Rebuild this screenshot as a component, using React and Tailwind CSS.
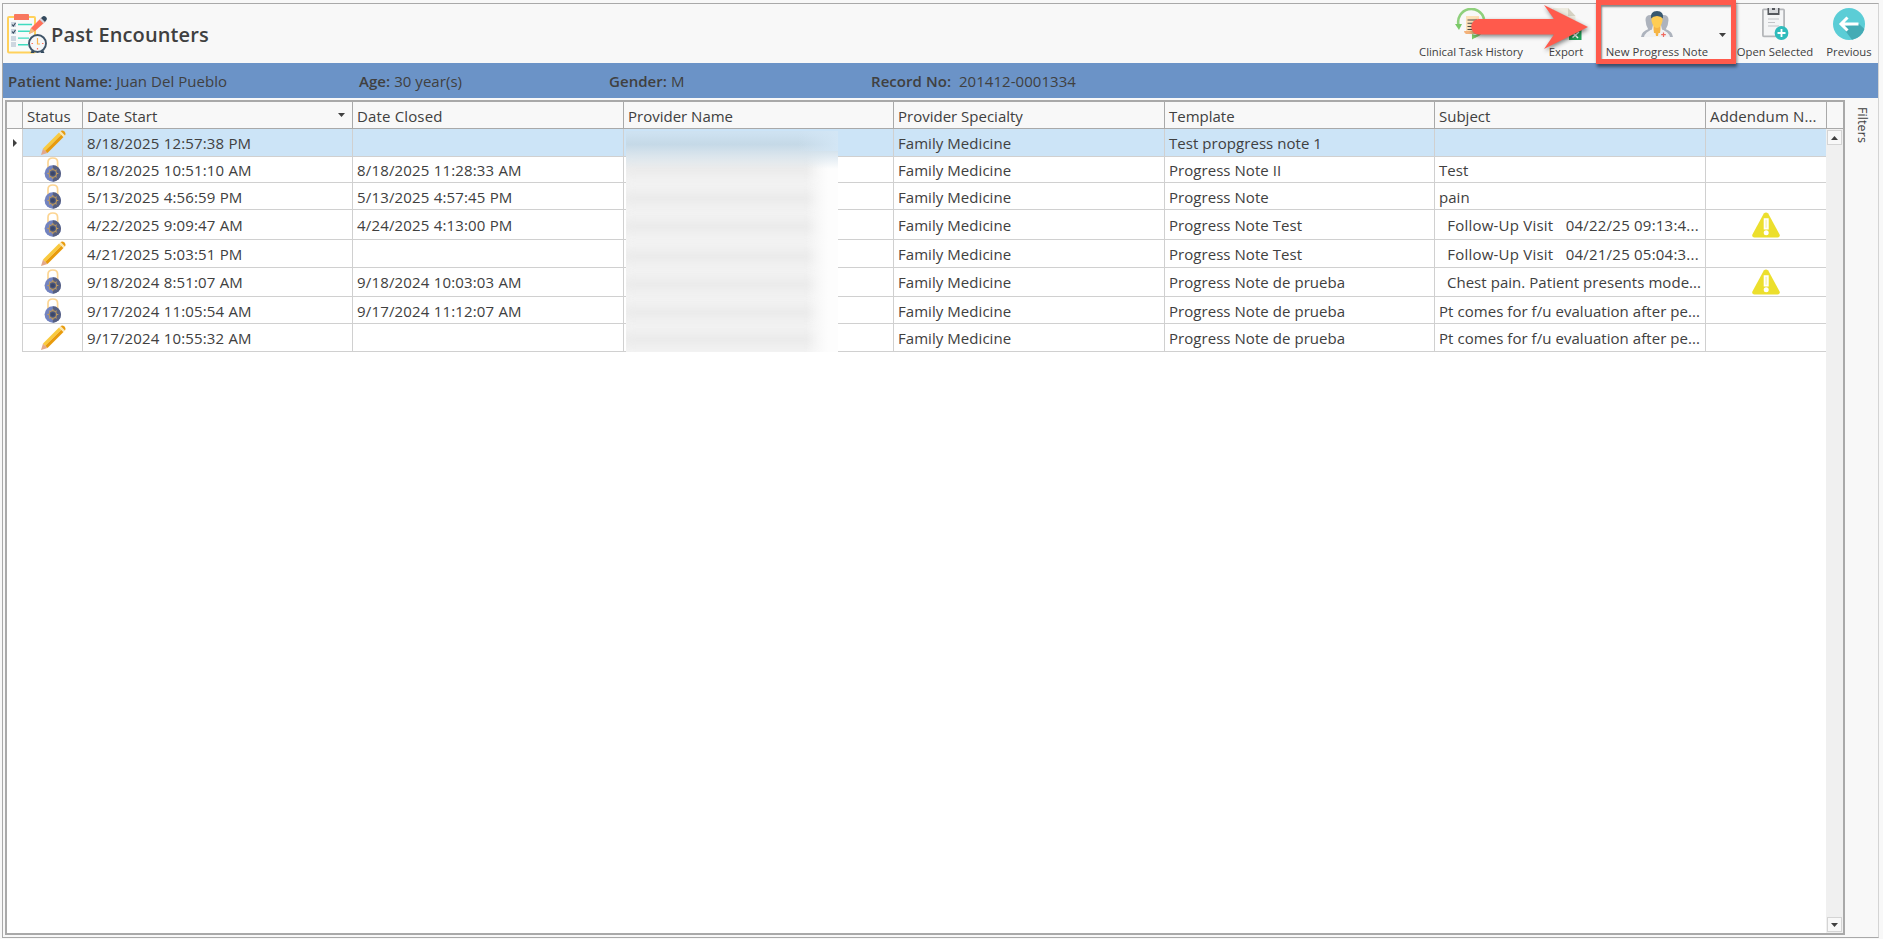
import React from "react";

const FONT = "font-['Open_Sans','Noto_Sans',sans-serif]";

function Pencil() {
  return (
    <svg width="26" height="26" viewBox="0 0 26 26" className="shrink-0">
      <path d="M1 25 3 18.5 7.5 23Z" fill="#e3a88c" />
      <path d="M3 18.5 19 2.6 21.3 4.8 5.2 20.8Z" fill="#f9ca3e" />
      <path d="M5.2 20.8 21.3 4.8 23.5 7 7.5 23Z" fill="#e89b0c" />
      <path d="M19 2.6 20.6 1 25 5.4 23.5 7Z" fill="#fbe6b0" />
      <path d="M20.6 1Q22.5 -.4 24.4 1.5T25 5.4Z" fill="#e89b0c" />
    </svg>
  );
}

function Lock() {
  return (
    <svg width="18" height="25" viewBox="0 0 18 25" className="shrink-0">
      <path d="M4 12V5.2Q4 1 8.8 1T13.6 5.2V12" fill="none" stroke="#fcd593" strokeWidth="1.7" />
      <circle cx="8.8" cy="16.5" r="8.2" fill="#7283c0" />
      <path d="M8.8 8.3a8.2 8.2 0 0 1 0 16.4Z" fill="#565f80" />
      <path d="M8.8 11v11M3.3 16.5h11M5 12.7l7.6 7.6M12.6 12.7l-7.6 7.6" stroke="#c19b5c" strokeWidth="1.1" />
      <circle cx="8.8" cy="16.5" r="3.7" fill="#4d5a80" stroke="#c19b5c" strokeWidth="1.1" />
      <circle cx="8.8" cy="16.5" r="2" fill="#3b4668" />
    </svg>
  );
}

function Warning() {
  return (
    <svg width="28" height="26" viewBox="0 0 28 26" className="shrink-0">
      <path d="M11.8 1.6Q14 -.8 16.2 1.6L27.6 22.4Q28.4 25.3 25.6 25.5H2.4Q-.4 25.3.4 22.4Z" fill="#ecdf2d" />
      <path d="M12.5 7H15.9V16.6H12.5Z" fill="#faf6c0" stroke="#fff" strokeWidth="1.6" />
      <circle cx="14.2" cy="20.8" r="2.5" fill="#fff" />
    </svg>
  );
}

function AppIcon() {
  return (
    <svg width="40" height="40" viewBox="0 0 40 40" className="shrink-0">
      <rect x="1" y="3" width="27" height="35.5" rx="1" fill="#f7fafa" stroke="#ffd15c" strokeWidth="2" />
      <path d="M7 1Q7 0 8 0H21Q22 0 22 1V6H7Z" fill="#f8775f" />
      <g stroke="#40dbc0" strokeWidth="1.4">
        <path d="M11 10.5H25M11 17.3H23M11 24.1H22M11 30.8H21" />
      </g>
      <g fill="#cdd6e0">
        <rect x="4" y="8" width="5" height="5" />
        <rect x="4" y="15" width="5" height="5" />
        <rect x="4" y="22" width="5" height="5" />
        <rect x="4" y="28" width="5" height="5" />
      </g>
      <path d="M5 10.5 6.3 12 8.5 9M5 17.5 6.3 19 8.5 16" fill="none" stroke="#334a5e" strokeWidth="1.1" />
      <path d="M22 20 24 14 34 4 38 8 28 17Z" fill="#ff7058" />
      <path d="M22 20 24 14 28 17.5Z" fill="#f2bd80" />
      <path d="M32.5 5.5 34 4 38 8 36.5 9.5Z" fill="#cdd6e0" />
      <path d="M34 4 36 2.2Q37.5 1.5 39 3T39.5 6L38 8Z" fill="#334a5e" />
      <path d="M25 36 23.5 39H27L28 37ZM36 36 37.5 39H34L33 37Z" fill="#334a5e" />
      <circle cx="30.5" cy="29.5" r="8.5" fill="#f5f7f8" stroke="#3f5468" strokeWidth="1.9" />
      <path d="M30.5 24V30H33" fill="none" stroke="#f9b54c" strokeWidth="1.2" />
      <path d="M30.5 34v1.5M24.5 29.5h1.5M35 29.5h1.5" stroke="#ff7058" strokeWidth="1.2" />
    </svg>
  );
}

function HistoryIcon() {
  return (
    <svg width="32" height="32" viewBox="0 0 32 32">
      <path d="M11 8H24V25H11Z" fill="#fde0b8" />
      <path d="M9 23H22V26H11Q9 25 9 23Z" fill="#f3b27a" />
      <path d="M12.5 12H22M12.5 15.3H22M12.5 18.5H22M12.5 21.5H19" stroke="#4b4b4b" strokeWidth="1.1" />
      <path d="M3.5 17A13 13 0 0 1 29 11" fill="none" stroke="#8fd07c" strokeWidth="2.6" />
      <path d="M0 16H7L4 22Z" fill="#7ac968" />
      <path d="M29 16A13 13 0 0 1 19 29" fill="none" stroke="#8fd07c" strokeWidth="2.4" />
      <path d="M17 26V31.5L23 28Z" fill="#7ac968" />
    </svg>
  );
}

function ExportIcon() {
  return (
    <svg width="32" height="32" viewBox="0 0 32 32">
      <path d="M3 0H18L25.5 8V32H3Z" fill="#edebe0" />
      <path d="M18 0 25.5 8H18Z" fill="#d5d2c3" />
      <path d="M19 19H31.5V32H19Z" fill="#22a35a" />
      <path d="M22.5 29.5 29 24M23.5 25.5 28 30" stroke="#fff" strokeWidth="1.5" />
    </svg>
  );
}

function PeopleIcon() {
  return (
    <svg width="32" height="26" viewBox="0 0 32 26">
      <path d="M4.5 9Q4.5 4 9.5 4H12V14L11 19H7.5Q4.5 14 4.5 9Z" fill="#adb3bd" />
      <path d="M27.5 9Q27.5 4 22.5 4H20V14L21 19H24.5Q27.5 14 27.5 9Z" fill="#adb3bd" />
      <path d="M0 26Q.5 20.5 7.5 18L10 20 4 26ZM32 26Q31.5 20.5 24.5 18L22 20 28 26Z" fill="#adb3bd" />
      <path d="M3 26Q4 21 12 18H20Q28 21 29 26Z" fill="#f1f2f4" />
      <path d="M12.5 14H19.5V18L19 22 17.5 22 17 25H15L14.5 22H13L12.5 18Z" fill="#f6b545" />
      <path d="M10.5 5H21.5V10Q20 16.5 16 17Q12 16.5 10.5 10Z" fill="#ffcd53" />
      <path d="M10 7.5Q9 0 16 0T22 7.5Q20 5 16 5T10 7.5Z" fill="#38586f" />
      <path d="M22.5 21.5v4.5M20.2 23.7h4.6" stroke="#f06a5f" strokeWidth="1.2" />
    </svg>
  );
}

function ClipboardIcon() {
  return (
    <svg width="27" height="32" viewBox="0 0 27 32">
      <rect x=".9" y="1.3" width="21.2" height="27" rx="1" fill="#f4f5f6" stroke="#b5b7ba" strokeWidth="1.8" />
      <path d="M5.5 0H17.5V7H5.5Z" fill="#55585d" />
      <path d="M7 0H16V5H7Z" fill="#d6d8db" />
      <path d="M10 0H13V2H10Z" fill="#55585d" />
      <path d="M6 11H17M6 14.5H13M6 18H17" stroke="#c2c4c7" strokeWidth="1" />
      <circle cx="19.5" cy="25" r="6.9" fill="#2fbcbc" />
      <path d="M19.5 21v8M15.5 25h8" stroke="#fff" strokeWidth="1.8" />
    </svg>
  );
}

function BackIcon() {
  return (
    <svg width="32" height="32" viewBox="0 0 32 32">
      <circle cx="16" cy="16" r="16" fill="#5bcdd6" />
      <path d="M26 16 31.5 21A16 16 0 0 1 19 31.7L9 18.5Z" fill="#44abb5" />
      <path d="M25.5 16H9M14.5 9.5 8 16 14.5 22.5" fill="none" stroke="#fff" strokeWidth="3" />
    </svg>
  );
}

const Caret = ({ className }) => (
  <svg width="7" height="4" viewBox="0 0 7 4" className={className}>
    <path d="M0 0H7L3.5 4Z" fill="#404040" />
  </svg>
);

function Tool({ icon, label, className, text = "" }) {
  return (
    <div className={`flex shrink-0 flex-col items-center ${className}`}>
      <div className="flex h-8 items-start justify-center">{icon}</div>
      <span className={`mt-[3px] whitespace-pre text-[11.3px] leading-[18px] ${text}`}>{label}</span>
    </div>
  );
}

const rows = [
  { p: true, start: "8/18/2025 12:57:38 PM", closed: "", tpl: "Test propgress note 1", subj: "" },
  { start: "8/18/2025 10:51:10 AM", closed: "8/18/2025 11:28:33 AM", tpl: "Progress Note II", subj: "Test" },
  { start: "5/13/2025 4:56:59 PM", closed: "5/13/2025 4:57:45 PM", tpl: "Progress Note", subj: "pain" },
  { start: "4/22/2025 9:09:47 AM", closed: "4/24/2025 4:13:00 PM", tpl: "Progress Note Test", subj: "  Follow-Up Visit   04/22/25 09:13:4...", wide: true, warn: true },
  { p: true, start: "4/21/2025 5:03:51 PM", closed: "", tpl: "Progress Note Test", subj: "  Follow-Up Visit   04/21/25 05:04:3...", wide: true },
  { start: "9/18/2024 8:51:07 AM", closed: "9/18/2024 10:03:03 AM", tpl: "Progress Note de prueba", subj: "  Chest pain. Patient presents mode...", warn: true },
  { start: "9/17/2024 11:05:54 AM", closed: "9/17/2024 11:12:07 AM", tpl: "Progress Note de prueba", subj: "Pt comes for f/u evaluation after pe..." },
  { p: true, start: "9/17/2024 10:55:32 AM", closed: "", tpl: "Progress Note de prueba", subj: "Pt comes for f/u evaluation after pe..." },
];

const COLS = "grid grid-cols-[16px_60px_270px_271px_270px_271px_270px_271px_1fr]";

function Head({ children, className = "" }) {
  return <div className={`flex items-center whitespace-pre border-r border-[#a9a9a9] pl-1 pt-[2px] ${className}`}>{children}</div>;
}

function Cell({ children, className = "" }) {
  return <div className={`flex items-center overflow-hidden border-b border-r border-[#d0d0d0] pl-1 pt-[2px] ${className}`}>{children}</div>;
}

export default function App() {
  return (
    <div className={`h-[939px] w-[1883px] overflow-hidden bg-[#f8f8f8] pl-[2px] pt-[3px] text-[15px] text-[#404040] ${FONT}`}>
      <div className="flex h-[935px] w-[1877px] flex-col border border-[#a9a9a9] border-r-[#d4d4d4]">
        <header className="relative flex h-[59px] shrink-0 justify-between">
          <div className="flex items-start pl-1 pt-[10px]">
            <AppIcon />
            <h1 className="ml-1 mt-[6px] whitespace-pre text-[20px] font-semibold leading-[30px] tracking-[0.13px]">Past Encounters</h1>
          </div>
          <div className="flex pt-1">
            <Tool className="w-[138px]" icon={<HistoryIcon />} label="Clinical Task History" text="tracking-[-0.03px]" />
            <Tool className="w-[52px]" icon={<ExportIcon />} label="Export" />
            <div className="flex w-[138px] pl-3">
              <Tool className="w-[106px]" icon={<div className="pt-[3px]"><PeopleIcon /></div>} label="New Progress Note" text="tracking-[0.08px]" />
              <Caret className="ml-[9px] mt-[25px]" />
            </div>
            <Tool className="w-[90px]" icon={<ClipboardIcon />} label="Open Selected" />
            <Tool className="w-[58px]" icon={<BackIcon />} label="Previous" />
          </div>
          <div className="absolute -top-[4px] left-[1593px] h-[64px] w-[140px] border-[5px] border-[#ff5a4c] shadow-[1px_3px_3px_#0007,inset_1px_2px_2px_#0007]" />
          <svg className="absolute left-[1467px] top-0 drop-shadow-[1px_2px_2px_#0007]" width="125" height="52" viewBox="0 0 125 52">
            <path d="M9 15H84L74 1 118 23 74 45 84 30.5H9A7.7 7.7 0 0 1 9 15Z" fill="#ff5a4c" />
          </svg>
        </header>

        <div className="grid h-[35px] shrink-0 grid-cols-[351px_250px_262px_1fr] items-center whitespace-pre bg-[#6b93c7] pl-[5px] pt-px tracking-[0.05px]">
          <span><b className="font-semibold">Patient Name:</b> Juan Del Pueblo</span>
          <span><b className="font-semibold">Age:</b> 30 year(s)</span>
          <span><b className="font-semibold">Gender:</b> M</span>
          <span><b className="font-semibold">Record No:</b>  201412-0001334</span>
        </div>

        <div className="flex min-h-0 flex-1 pb-[2px] pl-[2px] pt-[2px]">
          <main className="flex w-[1840px] flex-col border-2 border-[#a9a9a9] bg-white">
            <div className={`${COLS} h-[27px] shrink-0 border-b border-[#a9a9a9] bg-[#f8f8f8]`}>
              <Head />
              <Head>Status</Head>
              <Head className="justify-between">Date Start<Caret className="-mt-[3px] mr-[7px]" /></Head>
              <Head className="tracking-[0.15px]">Date Closed</Head>
              <Head>Provider Name</Head>
              <Head>Provider Specialty</Head>
              <Head>Template</Head>
              <Head>Subject</Head>
              <Head className="mr-4 tracking-[0.15px]">Addendum N...</Head>
            </div>
            <div className="flex min-h-0 flex-1">
              <div className="relative w-[1819px]">
                {rows.map((r, i) => (
                  <div key={i} className={`${COLS} whitespace-pre ${r.warn ? "h-[30px]" : "h-[27px]"}`}>
                    <div className="flex items-center border-r border-[#d0d0d0] pl-[6px]">
                      {i === 0 && <svg width="4" height="8" viewBox="0 0 4 8" className="-mt-px"><path d="M0 0 4 4 0 8Z" fill="#404040" /></svg>}
                    </div>
                    <div className={`flex items-start justify-center border-b border-r border-[#d0d0d0] ${i === 0 ? "bg-[#cce4f7]" : ""} ${r.warn ? "pt-[2px]" : "pt-px"}`}>
                      {r.p ? <Pencil /> : <Lock />}
                    </div>
                    {[r.start, r.closed, "", "Family Medicine", r.tpl, r.subj].map((t, c) => (
                      <Cell
                        key={c}
                        className={`${i === 0 ? "bg-[#cce4f7]" : ""} ${c < 2 ? "tracking-[0.17px]" : c === 5 && r.wide ? "tracking-[0.22px]" : "tracking-[0.05px]"}`}
                      >
                        {t}
                      </Cell>
                    ))}
                    <div className={`flex items-center justify-center border-b border-[#d0d0d0] ${i === 0 ? "bg-[#cce4f7]" : ""}`}>
                      {r.warn && <Warning />}
                    </div>
                  </div>
                ))}
                <div className="absolute left-[619px] top-[2px] h-[221px] w-[212px] overflow-hidden bg-[#f4f4f4]">
                  {[32, 61, 89, 119, 147, 175, 202].map((y) => (
                    <div key={y} className="absolute -left-1 h-[13px] w-[196px] bg-[#e9e9e9] blur-[6px]" style={{ top: y }} />
                  ))}
                  <div className="absolute right-0 top-5 h-[201px] w-8 bg-linear-to-r from-transparent to-[#fdfdfd] to-70%" />
                  <div className="absolute left-0 top-0 h-[38px] w-full bg-linear-to-b from-[#cee2f1] from-5% via-[#c5d9e7] via-35% to-transparent" />
                  <div className="absolute right-0 top-0 h-5 w-10 bg-linear-to-r from-transparent to-[#d3e6f5]" />
                </div>
              </div>
              <div className="flex w-[17px] flex-col items-start justify-between bg-[#f0f0f0] pb-px pl-px pt-px">
                <div className="flex size-[15px] items-center justify-center border border-[#d4d4d4] bg-[#f8f8f8]"><Caret className="rotate-180" /></div>
                <div className="flex size-[15px] items-center justify-center border border-[#d4d4d4] bg-[#f8f8f8]"><Caret /></div>
              </div>
            </div>
          </main>
          <aside className="flex flex-1 justify-center pt-[7px]">
            <span className="text-[12.5px] leading-4 tracking-[0.1px] [writing-mode:vertical-rl]">Filters</span>
          </aside>
        </div>
      </div>
    </div>
  );
}
